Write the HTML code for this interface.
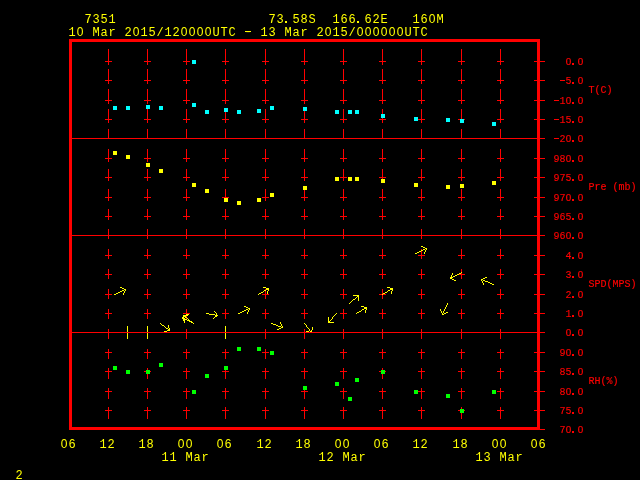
<!DOCTYPE html>
<html><head><meta charset="utf-8"><title>Meteogram 7351</title>
<style>
html,body{margin:0;padding:0;background:#000;overflow:hidden}
svg{display:block;will-change:transform}
text{font-family:"Liberation Mono",monospace;white-space:pre}
.t{font-size:12px;fill:#ffff00}
.z{font-family:"Liberation Sans",sans-serif;font-size:11.5px}
.l{font-size:10px;fill:#ff0000;stroke:#ff0000;stroke-width:.15px}
.zl{text-rendering:geometricPrecision;font-family:"Liberation Sans",sans-serif;font-size:9.6px}
.hy{font-size:16px}
.dt{font-size:13px}
.dl{font-size:14px}
</style></head><body>
<svg width="640" height="480" viewBox="0 0 640 480">
<rect width="640" height="480" fill="#000"/>
<g shape-rendering="crispEdges">
<g id="grid">
<rect x="108" y="49" width="1" height="10" fill="#ff0000"/>
<rect x="108" y="69" width="1" height="10" fill="#ff0000"/>
<rect x="108" y="89" width="1" height="10" fill="#ff0000"/>
<rect x="108" y="109" width="1" height="10" fill="#ff0000"/>
<rect x="108" y="129" width="1" height="10" fill="#ff0000"/>
<rect x="108" y="149" width="1" height="10" fill="#ff0000"/>
<rect x="108" y="169" width="1" height="10" fill="#ff0000"/>
<rect x="108" y="189" width="1" height="10" fill="#ff0000"/>
<rect x="108" y="209" width="1" height="10" fill="#ff0000"/>
<rect x="108" y="229" width="1" height="10" fill="#ff0000"/>
<rect x="108" y="249" width="1" height="10" fill="#ff0000"/>
<rect x="108" y="269" width="1" height="10" fill="#ff0000"/>
<rect x="108" y="289" width="1" height="10" fill="#ff0000"/>
<rect x="108" y="309" width="1" height="10" fill="#ff0000"/>
<rect x="108" y="329" width="1" height="10" fill="#ff0000"/>
<rect x="108" y="349" width="1" height="10" fill="#ff0000"/>
<rect x="108" y="369" width="1" height="10" fill="#ff0000"/>
<rect x="108" y="389" width="1" height="10" fill="#ff0000"/>
<rect x="108" y="409" width="1" height="10" fill="#ff0000"/>
<rect x="105" y="61" width="7" height="1" fill="#ff0000"/>
<rect x="108" y="58" width="1" height="7" fill="#ff0000"/>
<rect x="105" y="80" width="7" height="1" fill="#ff0000"/>
<rect x="108" y="77" width="1" height="7" fill="#ff0000"/>
<rect x="105" y="100" width="7" height="1" fill="#ff0000"/>
<rect x="108" y="97" width="1" height="7" fill="#ff0000"/>
<rect x="105" y="119" width="7" height="1" fill="#ff0000"/>
<rect x="108" y="116" width="1" height="7" fill="#ff0000"/>
<rect x="105" y="158" width="7" height="1" fill="#ff0000"/>
<rect x="108" y="155" width="1" height="7" fill="#ff0000"/>
<rect x="105" y="177" width="7" height="1" fill="#ff0000"/>
<rect x="108" y="174" width="1" height="7" fill="#ff0000"/>
<rect x="105" y="197" width="7" height="1" fill="#ff0000"/>
<rect x="108" y="194" width="1" height="7" fill="#ff0000"/>
<rect x="105" y="216" width="7" height="1" fill="#ff0000"/>
<rect x="108" y="213" width="1" height="7" fill="#ff0000"/>
<rect x="105" y="255" width="7" height="1" fill="#ff0000"/>
<rect x="108" y="252" width="1" height="7" fill="#ff0000"/>
<rect x="105" y="274" width="7" height="1" fill="#ff0000"/>
<rect x="108" y="271" width="1" height="7" fill="#ff0000"/>
<rect x="105" y="294" width="7" height="1" fill="#ff0000"/>
<rect x="108" y="291" width="1" height="7" fill="#ff0000"/>
<rect x="105" y="313" width="7" height="1" fill="#ff0000"/>
<rect x="108" y="310" width="1" height="7" fill="#ff0000"/>
<rect x="105" y="352" width="7" height="1" fill="#ff0000"/>
<rect x="108" y="349" width="1" height="7" fill="#ff0000"/>
<rect x="105" y="371" width="7" height="1" fill="#ff0000"/>
<rect x="108" y="368" width="1" height="7" fill="#ff0000"/>
<rect x="105" y="391" width="7" height="1" fill="#ff0000"/>
<rect x="108" y="388" width="1" height="7" fill="#ff0000"/>
<rect x="105" y="410" width="7" height="1" fill="#ff0000"/>
<rect x="108" y="407" width="1" height="7" fill="#ff0000"/>
<rect x="147" y="49" width="1" height="10" fill="#ff0000"/>
<rect x="147" y="69" width="1" height="10" fill="#ff0000"/>
<rect x="147" y="89" width="1" height="10" fill="#ff0000"/>
<rect x="147" y="109" width="1" height="10" fill="#ff0000"/>
<rect x="147" y="129" width="1" height="10" fill="#ff0000"/>
<rect x="147" y="149" width="1" height="10" fill="#ff0000"/>
<rect x="147" y="169" width="1" height="10" fill="#ff0000"/>
<rect x="147" y="189" width="1" height="10" fill="#ff0000"/>
<rect x="147" y="209" width="1" height="10" fill="#ff0000"/>
<rect x="147" y="229" width="1" height="10" fill="#ff0000"/>
<rect x="147" y="249" width="1" height="10" fill="#ff0000"/>
<rect x="147" y="269" width="1" height="10" fill="#ff0000"/>
<rect x="147" y="289" width="1" height="10" fill="#ff0000"/>
<rect x="147" y="309" width="1" height="10" fill="#ff0000"/>
<rect x="147" y="329" width="1" height="10" fill="#ff0000"/>
<rect x="147" y="349" width="1" height="10" fill="#ff0000"/>
<rect x="147" y="369" width="1" height="10" fill="#ff0000"/>
<rect x="147" y="389" width="1" height="10" fill="#ff0000"/>
<rect x="147" y="409" width="1" height="10" fill="#ff0000"/>
<rect x="144" y="61" width="7" height="1" fill="#ff0000"/>
<rect x="147" y="58" width="1" height="7" fill="#ff0000"/>
<rect x="144" y="80" width="7" height="1" fill="#ff0000"/>
<rect x="147" y="77" width="1" height="7" fill="#ff0000"/>
<rect x="144" y="100" width="7" height="1" fill="#ff0000"/>
<rect x="147" y="97" width="1" height="7" fill="#ff0000"/>
<rect x="144" y="119" width="7" height="1" fill="#ff0000"/>
<rect x="147" y="116" width="1" height="7" fill="#ff0000"/>
<rect x="144" y="158" width="7" height="1" fill="#ff0000"/>
<rect x="147" y="155" width="1" height="7" fill="#ff0000"/>
<rect x="144" y="177" width="7" height="1" fill="#ff0000"/>
<rect x="147" y="174" width="1" height="7" fill="#ff0000"/>
<rect x="144" y="197" width="7" height="1" fill="#ff0000"/>
<rect x="147" y="194" width="1" height="7" fill="#ff0000"/>
<rect x="144" y="216" width="7" height="1" fill="#ff0000"/>
<rect x="147" y="213" width="1" height="7" fill="#ff0000"/>
<rect x="144" y="255" width="7" height="1" fill="#ff0000"/>
<rect x="147" y="252" width="1" height="7" fill="#ff0000"/>
<rect x="144" y="274" width="7" height="1" fill="#ff0000"/>
<rect x="147" y="271" width="1" height="7" fill="#ff0000"/>
<rect x="144" y="294" width="7" height="1" fill="#ff0000"/>
<rect x="147" y="291" width="1" height="7" fill="#ff0000"/>
<rect x="144" y="313" width="7" height="1" fill="#ff0000"/>
<rect x="147" y="310" width="1" height="7" fill="#ff0000"/>
<rect x="144" y="352" width="7" height="1" fill="#ff0000"/>
<rect x="147" y="349" width="1" height="7" fill="#ff0000"/>
<rect x="144" y="371" width="7" height="1" fill="#ff0000"/>
<rect x="147" y="368" width="1" height="7" fill="#ff0000"/>
<rect x="144" y="391" width="7" height="1" fill="#ff0000"/>
<rect x="147" y="388" width="1" height="7" fill="#ff0000"/>
<rect x="144" y="410" width="7" height="1" fill="#ff0000"/>
<rect x="147" y="407" width="1" height="7" fill="#ff0000"/>
<rect x="186" y="49" width="1" height="10" fill="#ff0000"/>
<rect x="186" y="69" width="1" height="10" fill="#ff0000"/>
<rect x="186" y="89" width="1" height="10" fill="#ff0000"/>
<rect x="186" y="109" width="1" height="10" fill="#ff0000"/>
<rect x="186" y="129" width="1" height="10" fill="#ff0000"/>
<rect x="186" y="149" width="1" height="10" fill="#ff0000"/>
<rect x="186" y="169" width="1" height="10" fill="#ff0000"/>
<rect x="186" y="189" width="1" height="10" fill="#ff0000"/>
<rect x="186" y="209" width="1" height="10" fill="#ff0000"/>
<rect x="186" y="229" width="1" height="10" fill="#ff0000"/>
<rect x="186" y="249" width="1" height="10" fill="#ff0000"/>
<rect x="186" y="269" width="1" height="10" fill="#ff0000"/>
<rect x="186" y="289" width="1" height="10" fill="#ff0000"/>
<rect x="186" y="309" width="1" height="10" fill="#ff0000"/>
<rect x="186" y="329" width="1" height="10" fill="#ff0000"/>
<rect x="186" y="349" width="1" height="10" fill="#ff0000"/>
<rect x="186" y="369" width="1" height="10" fill="#ff0000"/>
<rect x="186" y="389" width="1" height="10" fill="#ff0000"/>
<rect x="186" y="409" width="1" height="10" fill="#ff0000"/>
<rect x="183" y="61" width="7" height="1" fill="#ff0000"/>
<rect x="186" y="58" width="1" height="7" fill="#ff0000"/>
<rect x="183" y="80" width="7" height="1" fill="#ff0000"/>
<rect x="186" y="77" width="1" height="7" fill="#ff0000"/>
<rect x="183" y="100" width="7" height="1" fill="#ff0000"/>
<rect x="186" y="97" width="1" height="7" fill="#ff0000"/>
<rect x="183" y="119" width="7" height="1" fill="#ff0000"/>
<rect x="186" y="116" width="1" height="7" fill="#ff0000"/>
<rect x="183" y="158" width="7" height="1" fill="#ff0000"/>
<rect x="186" y="155" width="1" height="7" fill="#ff0000"/>
<rect x="183" y="177" width="7" height="1" fill="#ff0000"/>
<rect x="186" y="174" width="1" height="7" fill="#ff0000"/>
<rect x="183" y="197" width="7" height="1" fill="#ff0000"/>
<rect x="186" y="194" width="1" height="7" fill="#ff0000"/>
<rect x="183" y="216" width="7" height="1" fill="#ff0000"/>
<rect x="186" y="213" width="1" height="7" fill="#ff0000"/>
<rect x="183" y="255" width="7" height="1" fill="#ff0000"/>
<rect x="186" y="252" width="1" height="7" fill="#ff0000"/>
<rect x="183" y="274" width="7" height="1" fill="#ff0000"/>
<rect x="186" y="271" width="1" height="7" fill="#ff0000"/>
<rect x="183" y="294" width="7" height="1" fill="#ff0000"/>
<rect x="186" y="291" width="1" height="7" fill="#ff0000"/>
<rect x="183" y="313" width="7" height="1" fill="#ff0000"/>
<rect x="186" y="310" width="1" height="7" fill="#ff0000"/>
<rect x="183" y="352" width="7" height="1" fill="#ff0000"/>
<rect x="186" y="349" width="1" height="7" fill="#ff0000"/>
<rect x="183" y="371" width="7" height="1" fill="#ff0000"/>
<rect x="186" y="368" width="1" height="7" fill="#ff0000"/>
<rect x="183" y="391" width="7" height="1" fill="#ff0000"/>
<rect x="186" y="388" width="1" height="7" fill="#ff0000"/>
<rect x="183" y="410" width="7" height="1" fill="#ff0000"/>
<rect x="186" y="407" width="1" height="7" fill="#ff0000"/>
<rect x="225" y="49" width="1" height="10" fill="#ff0000"/>
<rect x="225" y="69" width="1" height="10" fill="#ff0000"/>
<rect x="225" y="89" width="1" height="10" fill="#ff0000"/>
<rect x="225" y="109" width="1" height="10" fill="#ff0000"/>
<rect x="225" y="129" width="1" height="10" fill="#ff0000"/>
<rect x="225" y="149" width="1" height="10" fill="#ff0000"/>
<rect x="225" y="169" width="1" height="10" fill="#ff0000"/>
<rect x="225" y="189" width="1" height="10" fill="#ff0000"/>
<rect x="225" y="209" width="1" height="10" fill="#ff0000"/>
<rect x="225" y="229" width="1" height="10" fill="#ff0000"/>
<rect x="225" y="249" width="1" height="10" fill="#ff0000"/>
<rect x="225" y="269" width="1" height="10" fill="#ff0000"/>
<rect x="225" y="289" width="1" height="10" fill="#ff0000"/>
<rect x="225" y="309" width="1" height="10" fill="#ff0000"/>
<rect x="225" y="329" width="1" height="10" fill="#ff0000"/>
<rect x="225" y="349" width="1" height="10" fill="#ff0000"/>
<rect x="225" y="369" width="1" height="10" fill="#ff0000"/>
<rect x="225" y="389" width="1" height="10" fill="#ff0000"/>
<rect x="225" y="409" width="1" height="10" fill="#ff0000"/>
<rect x="222" y="61" width="7" height="1" fill="#ff0000"/>
<rect x="225" y="58" width="1" height="7" fill="#ff0000"/>
<rect x="222" y="80" width="7" height="1" fill="#ff0000"/>
<rect x="225" y="77" width="1" height="7" fill="#ff0000"/>
<rect x="222" y="100" width="7" height="1" fill="#ff0000"/>
<rect x="225" y="97" width="1" height="7" fill="#ff0000"/>
<rect x="222" y="119" width="7" height="1" fill="#ff0000"/>
<rect x="225" y="116" width="1" height="7" fill="#ff0000"/>
<rect x="222" y="158" width="7" height="1" fill="#ff0000"/>
<rect x="225" y="155" width="1" height="7" fill="#ff0000"/>
<rect x="222" y="177" width="7" height="1" fill="#ff0000"/>
<rect x="225" y="174" width="1" height="7" fill="#ff0000"/>
<rect x="222" y="197" width="7" height="1" fill="#ff0000"/>
<rect x="225" y="194" width="1" height="7" fill="#ff0000"/>
<rect x="222" y="216" width="7" height="1" fill="#ff0000"/>
<rect x="225" y="213" width="1" height="7" fill="#ff0000"/>
<rect x="222" y="255" width="7" height="1" fill="#ff0000"/>
<rect x="225" y="252" width="1" height="7" fill="#ff0000"/>
<rect x="222" y="274" width="7" height="1" fill="#ff0000"/>
<rect x="225" y="271" width="1" height="7" fill="#ff0000"/>
<rect x="222" y="294" width="7" height="1" fill="#ff0000"/>
<rect x="225" y="291" width="1" height="7" fill="#ff0000"/>
<rect x="222" y="313" width="7" height="1" fill="#ff0000"/>
<rect x="225" y="310" width="1" height="7" fill="#ff0000"/>
<rect x="222" y="352" width="7" height="1" fill="#ff0000"/>
<rect x="225" y="349" width="1" height="7" fill="#ff0000"/>
<rect x="222" y="371" width="7" height="1" fill="#ff0000"/>
<rect x="225" y="368" width="1" height="7" fill="#ff0000"/>
<rect x="222" y="391" width="7" height="1" fill="#ff0000"/>
<rect x="225" y="388" width="1" height="7" fill="#ff0000"/>
<rect x="222" y="410" width="7" height="1" fill="#ff0000"/>
<rect x="225" y="407" width="1" height="7" fill="#ff0000"/>
<rect x="265" y="49" width="1" height="10" fill="#ff0000"/>
<rect x="265" y="69" width="1" height="10" fill="#ff0000"/>
<rect x="265" y="89" width="1" height="10" fill="#ff0000"/>
<rect x="265" y="109" width="1" height="10" fill="#ff0000"/>
<rect x="265" y="129" width="1" height="10" fill="#ff0000"/>
<rect x="265" y="149" width="1" height="10" fill="#ff0000"/>
<rect x="265" y="169" width="1" height="10" fill="#ff0000"/>
<rect x="265" y="189" width="1" height="10" fill="#ff0000"/>
<rect x="265" y="209" width="1" height="10" fill="#ff0000"/>
<rect x="265" y="229" width="1" height="10" fill="#ff0000"/>
<rect x="265" y="249" width="1" height="10" fill="#ff0000"/>
<rect x="265" y="269" width="1" height="10" fill="#ff0000"/>
<rect x="265" y="289" width="1" height="10" fill="#ff0000"/>
<rect x="265" y="309" width="1" height="10" fill="#ff0000"/>
<rect x="265" y="329" width="1" height="10" fill="#ff0000"/>
<rect x="265" y="349" width="1" height="10" fill="#ff0000"/>
<rect x="265" y="369" width="1" height="10" fill="#ff0000"/>
<rect x="265" y="389" width="1" height="10" fill="#ff0000"/>
<rect x="265" y="409" width="1" height="10" fill="#ff0000"/>
<rect x="262" y="61" width="7" height="1" fill="#ff0000"/>
<rect x="265" y="58" width="1" height="7" fill="#ff0000"/>
<rect x="262" y="80" width="7" height="1" fill="#ff0000"/>
<rect x="265" y="77" width="1" height="7" fill="#ff0000"/>
<rect x="262" y="100" width="7" height="1" fill="#ff0000"/>
<rect x="265" y="97" width="1" height="7" fill="#ff0000"/>
<rect x="262" y="119" width="7" height="1" fill="#ff0000"/>
<rect x="265" y="116" width="1" height="7" fill="#ff0000"/>
<rect x="262" y="158" width="7" height="1" fill="#ff0000"/>
<rect x="265" y="155" width="1" height="7" fill="#ff0000"/>
<rect x="262" y="177" width="7" height="1" fill="#ff0000"/>
<rect x="265" y="174" width="1" height="7" fill="#ff0000"/>
<rect x="262" y="197" width="7" height="1" fill="#ff0000"/>
<rect x="265" y="194" width="1" height="7" fill="#ff0000"/>
<rect x="262" y="216" width="7" height="1" fill="#ff0000"/>
<rect x="265" y="213" width="1" height="7" fill="#ff0000"/>
<rect x="262" y="255" width="7" height="1" fill="#ff0000"/>
<rect x="265" y="252" width="1" height="7" fill="#ff0000"/>
<rect x="262" y="274" width="7" height="1" fill="#ff0000"/>
<rect x="265" y="271" width="1" height="7" fill="#ff0000"/>
<rect x="262" y="294" width="7" height="1" fill="#ff0000"/>
<rect x="265" y="291" width="1" height="7" fill="#ff0000"/>
<rect x="262" y="313" width="7" height="1" fill="#ff0000"/>
<rect x="265" y="310" width="1" height="7" fill="#ff0000"/>
<rect x="262" y="352" width="7" height="1" fill="#ff0000"/>
<rect x="265" y="349" width="1" height="7" fill="#ff0000"/>
<rect x="262" y="371" width="7" height="1" fill="#ff0000"/>
<rect x="265" y="368" width="1" height="7" fill="#ff0000"/>
<rect x="262" y="391" width="7" height="1" fill="#ff0000"/>
<rect x="265" y="388" width="1" height="7" fill="#ff0000"/>
<rect x="262" y="410" width="7" height="1" fill="#ff0000"/>
<rect x="265" y="407" width="1" height="7" fill="#ff0000"/>
<rect x="304" y="49" width="1" height="10" fill="#ff0000"/>
<rect x="304" y="69" width="1" height="10" fill="#ff0000"/>
<rect x="304" y="89" width="1" height="10" fill="#ff0000"/>
<rect x="304" y="109" width="1" height="10" fill="#ff0000"/>
<rect x="304" y="129" width="1" height="10" fill="#ff0000"/>
<rect x="304" y="149" width="1" height="10" fill="#ff0000"/>
<rect x="304" y="169" width="1" height="10" fill="#ff0000"/>
<rect x="304" y="189" width="1" height="10" fill="#ff0000"/>
<rect x="304" y="209" width="1" height="10" fill="#ff0000"/>
<rect x="304" y="229" width="1" height="10" fill="#ff0000"/>
<rect x="304" y="249" width="1" height="10" fill="#ff0000"/>
<rect x="304" y="269" width="1" height="10" fill="#ff0000"/>
<rect x="304" y="289" width="1" height="10" fill="#ff0000"/>
<rect x="304" y="309" width="1" height="10" fill="#ff0000"/>
<rect x="304" y="329" width="1" height="10" fill="#ff0000"/>
<rect x="304" y="349" width="1" height="10" fill="#ff0000"/>
<rect x="304" y="369" width="1" height="10" fill="#ff0000"/>
<rect x="304" y="389" width="1" height="10" fill="#ff0000"/>
<rect x="304" y="409" width="1" height="10" fill="#ff0000"/>
<rect x="301" y="61" width="7" height="1" fill="#ff0000"/>
<rect x="304" y="58" width="1" height="7" fill="#ff0000"/>
<rect x="301" y="80" width="7" height="1" fill="#ff0000"/>
<rect x="304" y="77" width="1" height="7" fill="#ff0000"/>
<rect x="301" y="100" width="7" height="1" fill="#ff0000"/>
<rect x="304" y="97" width="1" height="7" fill="#ff0000"/>
<rect x="301" y="119" width="7" height="1" fill="#ff0000"/>
<rect x="304" y="116" width="1" height="7" fill="#ff0000"/>
<rect x="301" y="158" width="7" height="1" fill="#ff0000"/>
<rect x="304" y="155" width="1" height="7" fill="#ff0000"/>
<rect x="301" y="177" width="7" height="1" fill="#ff0000"/>
<rect x="304" y="174" width="1" height="7" fill="#ff0000"/>
<rect x="301" y="197" width="7" height="1" fill="#ff0000"/>
<rect x="304" y="194" width="1" height="7" fill="#ff0000"/>
<rect x="301" y="216" width="7" height="1" fill="#ff0000"/>
<rect x="304" y="213" width="1" height="7" fill="#ff0000"/>
<rect x="301" y="255" width="7" height="1" fill="#ff0000"/>
<rect x="304" y="252" width="1" height="7" fill="#ff0000"/>
<rect x="301" y="274" width="7" height="1" fill="#ff0000"/>
<rect x="304" y="271" width="1" height="7" fill="#ff0000"/>
<rect x="301" y="294" width="7" height="1" fill="#ff0000"/>
<rect x="304" y="291" width="1" height="7" fill="#ff0000"/>
<rect x="301" y="313" width="7" height="1" fill="#ff0000"/>
<rect x="304" y="310" width="1" height="7" fill="#ff0000"/>
<rect x="301" y="352" width="7" height="1" fill="#ff0000"/>
<rect x="304" y="349" width="1" height="7" fill="#ff0000"/>
<rect x="301" y="371" width="7" height="1" fill="#ff0000"/>
<rect x="304" y="368" width="1" height="7" fill="#ff0000"/>
<rect x="301" y="391" width="7" height="1" fill="#ff0000"/>
<rect x="304" y="388" width="1" height="7" fill="#ff0000"/>
<rect x="301" y="410" width="7" height="1" fill="#ff0000"/>
<rect x="304" y="407" width="1" height="7" fill="#ff0000"/>
<rect x="343" y="49" width="1" height="10" fill="#ff0000"/>
<rect x="343" y="69" width="1" height="10" fill="#ff0000"/>
<rect x="343" y="89" width="1" height="10" fill="#ff0000"/>
<rect x="343" y="109" width="1" height="10" fill="#ff0000"/>
<rect x="343" y="129" width="1" height="10" fill="#ff0000"/>
<rect x="343" y="149" width="1" height="10" fill="#ff0000"/>
<rect x="343" y="169" width="1" height="10" fill="#ff0000"/>
<rect x="343" y="189" width="1" height="10" fill="#ff0000"/>
<rect x="343" y="209" width="1" height="10" fill="#ff0000"/>
<rect x="343" y="229" width="1" height="10" fill="#ff0000"/>
<rect x="343" y="249" width="1" height="10" fill="#ff0000"/>
<rect x="343" y="269" width="1" height="10" fill="#ff0000"/>
<rect x="343" y="289" width="1" height="10" fill="#ff0000"/>
<rect x="343" y="309" width="1" height="10" fill="#ff0000"/>
<rect x="343" y="329" width="1" height="10" fill="#ff0000"/>
<rect x="343" y="349" width="1" height="10" fill="#ff0000"/>
<rect x="343" y="369" width="1" height="10" fill="#ff0000"/>
<rect x="343" y="389" width="1" height="10" fill="#ff0000"/>
<rect x="343" y="409" width="1" height="10" fill="#ff0000"/>
<rect x="340" y="61" width="7" height="1" fill="#ff0000"/>
<rect x="343" y="58" width="1" height="7" fill="#ff0000"/>
<rect x="340" y="80" width="7" height="1" fill="#ff0000"/>
<rect x="343" y="77" width="1" height="7" fill="#ff0000"/>
<rect x="340" y="100" width="7" height="1" fill="#ff0000"/>
<rect x="343" y="97" width="1" height="7" fill="#ff0000"/>
<rect x="340" y="119" width="7" height="1" fill="#ff0000"/>
<rect x="343" y="116" width="1" height="7" fill="#ff0000"/>
<rect x="340" y="158" width="7" height="1" fill="#ff0000"/>
<rect x="343" y="155" width="1" height="7" fill="#ff0000"/>
<rect x="340" y="177" width="7" height="1" fill="#ff0000"/>
<rect x="343" y="174" width="1" height="7" fill="#ff0000"/>
<rect x="340" y="197" width="7" height="1" fill="#ff0000"/>
<rect x="343" y="194" width="1" height="7" fill="#ff0000"/>
<rect x="340" y="216" width="7" height="1" fill="#ff0000"/>
<rect x="343" y="213" width="1" height="7" fill="#ff0000"/>
<rect x="340" y="255" width="7" height="1" fill="#ff0000"/>
<rect x="343" y="252" width="1" height="7" fill="#ff0000"/>
<rect x="340" y="274" width="7" height="1" fill="#ff0000"/>
<rect x="343" y="271" width="1" height="7" fill="#ff0000"/>
<rect x="340" y="294" width="7" height="1" fill="#ff0000"/>
<rect x="343" y="291" width="1" height="7" fill="#ff0000"/>
<rect x="340" y="313" width="7" height="1" fill="#ff0000"/>
<rect x="343" y="310" width="1" height="7" fill="#ff0000"/>
<rect x="340" y="352" width="7" height="1" fill="#ff0000"/>
<rect x="343" y="349" width="1" height="7" fill="#ff0000"/>
<rect x="340" y="371" width="7" height="1" fill="#ff0000"/>
<rect x="343" y="368" width="1" height="7" fill="#ff0000"/>
<rect x="340" y="391" width="7" height="1" fill="#ff0000"/>
<rect x="343" y="388" width="1" height="7" fill="#ff0000"/>
<rect x="340" y="410" width="7" height="1" fill="#ff0000"/>
<rect x="343" y="407" width="1" height="7" fill="#ff0000"/>
<rect x="382" y="49" width="1" height="10" fill="#ff0000"/>
<rect x="382" y="69" width="1" height="10" fill="#ff0000"/>
<rect x="382" y="89" width="1" height="10" fill="#ff0000"/>
<rect x="382" y="109" width="1" height="10" fill="#ff0000"/>
<rect x="382" y="129" width="1" height="10" fill="#ff0000"/>
<rect x="382" y="149" width="1" height="10" fill="#ff0000"/>
<rect x="382" y="169" width="1" height="10" fill="#ff0000"/>
<rect x="382" y="189" width="1" height="10" fill="#ff0000"/>
<rect x="382" y="209" width="1" height="10" fill="#ff0000"/>
<rect x="382" y="229" width="1" height="10" fill="#ff0000"/>
<rect x="382" y="249" width="1" height="10" fill="#ff0000"/>
<rect x="382" y="269" width="1" height="10" fill="#ff0000"/>
<rect x="382" y="289" width="1" height="10" fill="#ff0000"/>
<rect x="382" y="309" width="1" height="10" fill="#ff0000"/>
<rect x="382" y="329" width="1" height="10" fill="#ff0000"/>
<rect x="382" y="349" width="1" height="10" fill="#ff0000"/>
<rect x="382" y="369" width="1" height="10" fill="#ff0000"/>
<rect x="382" y="389" width="1" height="10" fill="#ff0000"/>
<rect x="382" y="409" width="1" height="10" fill="#ff0000"/>
<rect x="379" y="61" width="7" height="1" fill="#ff0000"/>
<rect x="382" y="58" width="1" height="7" fill="#ff0000"/>
<rect x="379" y="80" width="7" height="1" fill="#ff0000"/>
<rect x="382" y="77" width="1" height="7" fill="#ff0000"/>
<rect x="379" y="100" width="7" height="1" fill="#ff0000"/>
<rect x="382" y="97" width="1" height="7" fill="#ff0000"/>
<rect x="379" y="119" width="7" height="1" fill="#ff0000"/>
<rect x="382" y="116" width="1" height="7" fill="#ff0000"/>
<rect x="379" y="158" width="7" height="1" fill="#ff0000"/>
<rect x="382" y="155" width="1" height="7" fill="#ff0000"/>
<rect x="379" y="177" width="7" height="1" fill="#ff0000"/>
<rect x="382" y="174" width="1" height="7" fill="#ff0000"/>
<rect x="379" y="197" width="7" height="1" fill="#ff0000"/>
<rect x="382" y="194" width="1" height="7" fill="#ff0000"/>
<rect x="379" y="216" width="7" height="1" fill="#ff0000"/>
<rect x="382" y="213" width="1" height="7" fill="#ff0000"/>
<rect x="379" y="255" width="7" height="1" fill="#ff0000"/>
<rect x="382" y="252" width="1" height="7" fill="#ff0000"/>
<rect x="379" y="274" width="7" height="1" fill="#ff0000"/>
<rect x="382" y="271" width="1" height="7" fill="#ff0000"/>
<rect x="379" y="294" width="7" height="1" fill="#ff0000"/>
<rect x="382" y="291" width="1" height="7" fill="#ff0000"/>
<rect x="379" y="313" width="7" height="1" fill="#ff0000"/>
<rect x="382" y="310" width="1" height="7" fill="#ff0000"/>
<rect x="379" y="352" width="7" height="1" fill="#ff0000"/>
<rect x="382" y="349" width="1" height="7" fill="#ff0000"/>
<rect x="379" y="371" width="7" height="1" fill="#ff0000"/>
<rect x="382" y="368" width="1" height="7" fill="#ff0000"/>
<rect x="379" y="391" width="7" height="1" fill="#ff0000"/>
<rect x="382" y="388" width="1" height="7" fill="#ff0000"/>
<rect x="379" y="410" width="7" height="1" fill="#ff0000"/>
<rect x="382" y="407" width="1" height="7" fill="#ff0000"/>
<rect x="421" y="49" width="1" height="10" fill="#ff0000"/>
<rect x="421" y="69" width="1" height="10" fill="#ff0000"/>
<rect x="421" y="89" width="1" height="10" fill="#ff0000"/>
<rect x="421" y="109" width="1" height="10" fill="#ff0000"/>
<rect x="421" y="129" width="1" height="10" fill="#ff0000"/>
<rect x="421" y="149" width="1" height="10" fill="#ff0000"/>
<rect x="421" y="169" width="1" height="10" fill="#ff0000"/>
<rect x="421" y="189" width="1" height="10" fill="#ff0000"/>
<rect x="421" y="209" width="1" height="10" fill="#ff0000"/>
<rect x="421" y="229" width="1" height="10" fill="#ff0000"/>
<rect x="421" y="249" width="1" height="10" fill="#ff0000"/>
<rect x="421" y="269" width="1" height="10" fill="#ff0000"/>
<rect x="421" y="289" width="1" height="10" fill="#ff0000"/>
<rect x="421" y="309" width="1" height="10" fill="#ff0000"/>
<rect x="421" y="329" width="1" height="10" fill="#ff0000"/>
<rect x="421" y="349" width="1" height="10" fill="#ff0000"/>
<rect x="421" y="369" width="1" height="10" fill="#ff0000"/>
<rect x="421" y="389" width="1" height="10" fill="#ff0000"/>
<rect x="421" y="409" width="1" height="10" fill="#ff0000"/>
<rect x="418" y="61" width="7" height="1" fill="#ff0000"/>
<rect x="421" y="58" width="1" height="7" fill="#ff0000"/>
<rect x="418" y="80" width="7" height="1" fill="#ff0000"/>
<rect x="421" y="77" width="1" height="7" fill="#ff0000"/>
<rect x="418" y="100" width="7" height="1" fill="#ff0000"/>
<rect x="421" y="97" width="1" height="7" fill="#ff0000"/>
<rect x="418" y="119" width="7" height="1" fill="#ff0000"/>
<rect x="421" y="116" width="1" height="7" fill="#ff0000"/>
<rect x="418" y="158" width="7" height="1" fill="#ff0000"/>
<rect x="421" y="155" width="1" height="7" fill="#ff0000"/>
<rect x="418" y="177" width="7" height="1" fill="#ff0000"/>
<rect x="421" y="174" width="1" height="7" fill="#ff0000"/>
<rect x="418" y="197" width="7" height="1" fill="#ff0000"/>
<rect x="421" y="194" width="1" height="7" fill="#ff0000"/>
<rect x="418" y="216" width="7" height="1" fill="#ff0000"/>
<rect x="421" y="213" width="1" height="7" fill="#ff0000"/>
<rect x="418" y="255" width="7" height="1" fill="#ff0000"/>
<rect x="421" y="252" width="1" height="7" fill="#ff0000"/>
<rect x="418" y="274" width="7" height="1" fill="#ff0000"/>
<rect x="421" y="271" width="1" height="7" fill="#ff0000"/>
<rect x="418" y="294" width="7" height="1" fill="#ff0000"/>
<rect x="421" y="291" width="1" height="7" fill="#ff0000"/>
<rect x="418" y="313" width="7" height="1" fill="#ff0000"/>
<rect x="421" y="310" width="1" height="7" fill="#ff0000"/>
<rect x="418" y="352" width="7" height="1" fill="#ff0000"/>
<rect x="421" y="349" width="1" height="7" fill="#ff0000"/>
<rect x="418" y="371" width="7" height="1" fill="#ff0000"/>
<rect x="421" y="368" width="1" height="7" fill="#ff0000"/>
<rect x="418" y="391" width="7" height="1" fill="#ff0000"/>
<rect x="421" y="388" width="1" height="7" fill="#ff0000"/>
<rect x="418" y="410" width="7" height="1" fill="#ff0000"/>
<rect x="421" y="407" width="1" height="7" fill="#ff0000"/>
<rect x="461" y="49" width="1" height="10" fill="#ff0000"/>
<rect x="461" y="69" width="1" height="10" fill="#ff0000"/>
<rect x="461" y="89" width="1" height="10" fill="#ff0000"/>
<rect x="461" y="109" width="1" height="10" fill="#ff0000"/>
<rect x="461" y="129" width="1" height="10" fill="#ff0000"/>
<rect x="461" y="149" width="1" height="10" fill="#ff0000"/>
<rect x="461" y="169" width="1" height="10" fill="#ff0000"/>
<rect x="461" y="189" width="1" height="10" fill="#ff0000"/>
<rect x="461" y="209" width="1" height="10" fill="#ff0000"/>
<rect x="461" y="229" width="1" height="10" fill="#ff0000"/>
<rect x="461" y="249" width="1" height="10" fill="#ff0000"/>
<rect x="461" y="269" width="1" height="10" fill="#ff0000"/>
<rect x="461" y="289" width="1" height="10" fill="#ff0000"/>
<rect x="461" y="309" width="1" height="10" fill="#ff0000"/>
<rect x="461" y="329" width="1" height="10" fill="#ff0000"/>
<rect x="461" y="349" width="1" height="10" fill="#ff0000"/>
<rect x="461" y="369" width="1" height="10" fill="#ff0000"/>
<rect x="461" y="389" width="1" height="10" fill="#ff0000"/>
<rect x="461" y="409" width="1" height="10" fill="#ff0000"/>
<rect x="458" y="61" width="7" height="1" fill="#ff0000"/>
<rect x="461" y="58" width="1" height="7" fill="#ff0000"/>
<rect x="458" y="80" width="7" height="1" fill="#ff0000"/>
<rect x="461" y="77" width="1" height="7" fill="#ff0000"/>
<rect x="458" y="100" width="7" height="1" fill="#ff0000"/>
<rect x="461" y="97" width="1" height="7" fill="#ff0000"/>
<rect x="458" y="119" width="7" height="1" fill="#ff0000"/>
<rect x="461" y="116" width="1" height="7" fill="#ff0000"/>
<rect x="458" y="158" width="7" height="1" fill="#ff0000"/>
<rect x="461" y="155" width="1" height="7" fill="#ff0000"/>
<rect x="458" y="177" width="7" height="1" fill="#ff0000"/>
<rect x="461" y="174" width="1" height="7" fill="#ff0000"/>
<rect x="458" y="197" width="7" height="1" fill="#ff0000"/>
<rect x="461" y="194" width="1" height="7" fill="#ff0000"/>
<rect x="458" y="216" width="7" height="1" fill="#ff0000"/>
<rect x="461" y="213" width="1" height="7" fill="#ff0000"/>
<rect x="458" y="255" width="7" height="1" fill="#ff0000"/>
<rect x="461" y="252" width="1" height="7" fill="#ff0000"/>
<rect x="458" y="274" width="7" height="1" fill="#ff0000"/>
<rect x="461" y="271" width="1" height="7" fill="#ff0000"/>
<rect x="458" y="294" width="7" height="1" fill="#ff0000"/>
<rect x="461" y="291" width="1" height="7" fill="#ff0000"/>
<rect x="458" y="313" width="7" height="1" fill="#ff0000"/>
<rect x="461" y="310" width="1" height="7" fill="#ff0000"/>
<rect x="458" y="352" width="7" height="1" fill="#ff0000"/>
<rect x="461" y="349" width="1" height="7" fill="#ff0000"/>
<rect x="458" y="371" width="7" height="1" fill="#ff0000"/>
<rect x="461" y="368" width="1" height="7" fill="#ff0000"/>
<rect x="458" y="391" width="7" height="1" fill="#ff0000"/>
<rect x="461" y="388" width="1" height="7" fill="#ff0000"/>
<rect x="458" y="410" width="7" height="1" fill="#ff0000"/>
<rect x="461" y="407" width="1" height="7" fill="#ff0000"/>
<rect x="500" y="49" width="1" height="10" fill="#ff0000"/>
<rect x="500" y="69" width="1" height="10" fill="#ff0000"/>
<rect x="500" y="89" width="1" height="10" fill="#ff0000"/>
<rect x="500" y="109" width="1" height="10" fill="#ff0000"/>
<rect x="500" y="129" width="1" height="10" fill="#ff0000"/>
<rect x="500" y="149" width="1" height="10" fill="#ff0000"/>
<rect x="500" y="169" width="1" height="10" fill="#ff0000"/>
<rect x="500" y="189" width="1" height="10" fill="#ff0000"/>
<rect x="500" y="209" width="1" height="10" fill="#ff0000"/>
<rect x="500" y="229" width="1" height="10" fill="#ff0000"/>
<rect x="500" y="249" width="1" height="10" fill="#ff0000"/>
<rect x="500" y="269" width="1" height="10" fill="#ff0000"/>
<rect x="500" y="289" width="1" height="10" fill="#ff0000"/>
<rect x="500" y="309" width="1" height="10" fill="#ff0000"/>
<rect x="500" y="329" width="1" height="10" fill="#ff0000"/>
<rect x="500" y="349" width="1" height="10" fill="#ff0000"/>
<rect x="500" y="369" width="1" height="10" fill="#ff0000"/>
<rect x="500" y="389" width="1" height="10" fill="#ff0000"/>
<rect x="500" y="409" width="1" height="10" fill="#ff0000"/>
<rect x="497" y="61" width="7" height="1" fill="#ff0000"/>
<rect x="500" y="58" width="1" height="7" fill="#ff0000"/>
<rect x="497" y="80" width="7" height="1" fill="#ff0000"/>
<rect x="500" y="77" width="1" height="7" fill="#ff0000"/>
<rect x="497" y="100" width="7" height="1" fill="#ff0000"/>
<rect x="500" y="97" width="1" height="7" fill="#ff0000"/>
<rect x="497" y="119" width="7" height="1" fill="#ff0000"/>
<rect x="500" y="116" width="1" height="7" fill="#ff0000"/>
<rect x="497" y="158" width="7" height="1" fill="#ff0000"/>
<rect x="500" y="155" width="1" height="7" fill="#ff0000"/>
<rect x="497" y="177" width="7" height="1" fill="#ff0000"/>
<rect x="500" y="174" width="1" height="7" fill="#ff0000"/>
<rect x="497" y="197" width="7" height="1" fill="#ff0000"/>
<rect x="500" y="194" width="1" height="7" fill="#ff0000"/>
<rect x="497" y="216" width="7" height="1" fill="#ff0000"/>
<rect x="500" y="213" width="1" height="7" fill="#ff0000"/>
<rect x="497" y="255" width="7" height="1" fill="#ff0000"/>
<rect x="500" y="252" width="1" height="7" fill="#ff0000"/>
<rect x="497" y="274" width="7" height="1" fill="#ff0000"/>
<rect x="500" y="271" width="1" height="7" fill="#ff0000"/>
<rect x="497" y="294" width="7" height="1" fill="#ff0000"/>
<rect x="500" y="291" width="1" height="7" fill="#ff0000"/>
<rect x="497" y="313" width="7" height="1" fill="#ff0000"/>
<rect x="500" y="310" width="1" height="7" fill="#ff0000"/>
<rect x="497" y="352" width="7" height="1" fill="#ff0000"/>
<rect x="500" y="349" width="1" height="7" fill="#ff0000"/>
<rect x="497" y="371" width="7" height="1" fill="#ff0000"/>
<rect x="500" y="368" width="1" height="7" fill="#ff0000"/>
<rect x="497" y="391" width="7" height="1" fill="#ff0000"/>
<rect x="500" y="388" width="1" height="7" fill="#ff0000"/>
<rect x="497" y="410" width="7" height="1" fill="#ff0000"/>
<rect x="500" y="407" width="1" height="7" fill="#ff0000"/>
<rect x="534" y="61" width="11" height="1" fill="#ff0000"/>
<rect x="534" y="80" width="11" height="1" fill="#ff0000"/>
<rect x="534" y="100" width="11" height="1" fill="#ff0000"/>
<rect x="534" y="119" width="11" height="1" fill="#ff0000"/>
<rect x="534" y="138" width="11" height="1" fill="#ff0000"/>
<rect x="534" y="158" width="11" height="1" fill="#ff0000"/>
<rect x="534" y="177" width="11" height="1" fill="#ff0000"/>
<rect x="534" y="197" width="11" height="1" fill="#ff0000"/>
<rect x="534" y="216" width="11" height="1" fill="#ff0000"/>
<rect x="534" y="235" width="11" height="1" fill="#ff0000"/>
<rect x="534" y="255" width="11" height="1" fill="#ff0000"/>
<rect x="534" y="274" width="11" height="1" fill="#ff0000"/>
<rect x="534" y="294" width="11" height="1" fill="#ff0000"/>
<rect x="534" y="313" width="11" height="1" fill="#ff0000"/>
<rect x="534" y="332" width="11" height="1" fill="#ff0000"/>
<rect x="534" y="352" width="11" height="1" fill="#ff0000"/>
<rect x="534" y="371" width="11" height="1" fill="#ff0000"/>
<rect x="534" y="391" width="11" height="1" fill="#ff0000"/>
<rect x="534" y="410" width="11" height="1" fill="#ff0000"/>
<rect x="534" y="429" width="11" height="1" fill="#ff0000"/>
<rect x="69" y="39" width="3" height="391" fill="#ff0000"/>
<rect x="537" y="39" width="3" height="391" fill="#ff0000"/>
<rect x="69" y="39" width="471" height="3" fill="#ff0000"/>
<rect x="69" y="427" width="471" height="3" fill="#ff0000"/>
</g>
<g id="temp">
<rect x="113" y="106" width="4" height="4" fill="#00ffff"/>
<rect x="126" y="106" width="4" height="4" fill="#00ffff"/>
<rect x="146" y="105" width="4" height="4" fill="#00ffff"/>
<rect x="159" y="106" width="4" height="4" fill="#00ffff"/>
<rect x="192" y="60" width="4" height="4" fill="#00ffff"/>
<rect x="192" y="103" width="4" height="4" fill="#00ffff"/>
<rect x="205" y="110" width="4" height="4" fill="#00ffff"/>
<rect x="224" y="108" width="4" height="4" fill="#00ffff"/>
<rect x="237" y="110" width="4" height="4" fill="#00ffff"/>
<rect x="257" y="109" width="4" height="4" fill="#00ffff"/>
<rect x="270" y="106" width="4" height="4" fill="#00ffff"/>
<rect x="303" y="107" width="4" height="4" fill="#00ffff"/>
<rect x="335" y="110" width="4" height="4" fill="#00ffff"/>
<rect x="348" y="110" width="4" height="4" fill="#00ffff"/>
<rect x="355" y="110" width="4" height="4" fill="#00ffff"/>
<rect x="381" y="114" width="4" height="4" fill="#00ffff"/>
<rect x="414" y="117" width="4" height="4" fill="#00ffff"/>
<rect x="446" y="118" width="4" height="4" fill="#00ffff"/>
<rect x="460" y="119" width="4" height="4" fill="#00ffff"/>
<rect x="492" y="122" width="4" height="4" fill="#00ffff"/>
</g><g id="pres">
<rect x="113" y="151" width="4" height="4" fill="#ffff00"/>
<rect x="126" y="155" width="4" height="4" fill="#ffff00"/>
<rect x="146" y="163" width="4" height="4" fill="#ffff00"/>
<rect x="159" y="169" width="4" height="4" fill="#ffff00"/>
<rect x="192" y="183" width="4" height="4" fill="#ffff00"/>
<rect x="205" y="189" width="4" height="4" fill="#ffff00"/>
<rect x="224" y="198" width="4" height="4" fill="#ffff00"/>
<rect x="237" y="201" width="4" height="4" fill="#ffff00"/>
<rect x="257" y="198" width="4" height="4" fill="#ffff00"/>
<rect x="270" y="193" width="4" height="4" fill="#ffff00"/>
<rect x="303" y="186" width="4" height="4" fill="#ffff00"/>
<rect x="335" y="177" width="4" height="4" fill="#ffff00"/>
<rect x="348" y="177" width="4" height="4" fill="#ffff00"/>
<rect x="355" y="177" width="4" height="4" fill="#ffff00"/>
<rect x="381" y="179" width="4" height="4" fill="#ffff00"/>
<rect x="414" y="183" width="4" height="4" fill="#ffff00"/>
<rect x="446" y="185" width="4" height="4" fill="#ffff00"/>
<rect x="460" y="184" width="4" height="4" fill="#ffff00"/>
<rect x="492" y="181" width="4" height="4" fill="#ffff00"/>
</g><g id="rh">
<rect x="113" y="366" width="4" height="4" fill="#00ff00"/>
<rect x="126" y="370" width="4" height="4" fill="#00ff00"/>
<rect x="146" y="370" width="4" height="4" fill="#00ff00"/>
<rect x="159" y="363" width="4" height="4" fill="#00ff00"/>
<rect x="192" y="390" width="4" height="4" fill="#00ff00"/>
<rect x="205" y="374" width="4" height="4" fill="#00ff00"/>
<rect x="224" y="366" width="4" height="4" fill="#00ff00"/>
<rect x="237" y="347" width="4" height="4" fill="#00ff00"/>
<rect x="257" y="347" width="4" height="4" fill="#00ff00"/>
<rect x="270" y="351" width="4" height="4" fill="#00ff00"/>
<rect x="303" y="386" width="4" height="4" fill="#00ff00"/>
<rect x="335" y="382" width="4" height="4" fill="#00ff00"/>
<rect x="348" y="397" width="4" height="4" fill="#00ff00"/>
<rect x="355" y="378" width="4" height="4" fill="#00ff00"/>
<rect x="381" y="370" width="4" height="4" fill="#00ff00"/>
<rect x="414" y="390" width="4" height="4" fill="#00ff00"/>
<rect x="446" y="394" width="4" height="4" fill="#00ff00"/>
<rect x="460" y="409" width="4" height="4" fill="#00ff00"/>
<rect x="492" y="390" width="4" height="4" fill="#00ff00"/>
</g>
<g id="wind" stroke="#ffff00" stroke-width="1" fill="none">
<rect x="127" y="326" width="1" height="13" fill="#ffff00" stroke="none"/>
<rect x="147" y="326" width="1" height="13" fill="#ffff00" stroke="none"/>
<rect x="225" y="326" width="1" height="13" fill="#ffff00" stroke="none"/>
<path d="M120 287h2v1h-2zM122 288h2v1h-2zM124 289h2v1h-2zM122 290h2v1h-2zM125 290h1v1h-1zM120 291h2v1h-2zM124 291h1v1h-1zM118 292h2v1h-2zM124 292h1v1h-1zM116 293h2v1h-2zM123 293h1v1h-1zM114 294h2v1h-2zM123 294h1v1h-1z" fill="#ffff00" stroke="none"/>
<path d="M160 323h1v1h-1zM161 324h1v1h-1zM162 325h2v1h-2zM168 325h1v1h-1zM164 326h1v1h-1zM168 326h1v1h-1zM165 327h1v1h-1zM168 327h1v1h-1zM166 328h2v1h-2zM169 328h1v1h-1zM168 329h2v1h-2zM167 330h3v1h-3zM164 331h3v1h-3z" fill="#ffff00" stroke="none"/>
<path d="M186 314h3v1h-3zM183 315h3v1h-3zM183 316h2v1h-2zM183 317h1v1h-1zM185 317h2v1h-2zM184 318h1v1h-1zM187 318h1v1h-1zM184 319h1v1h-1zM188 319h1v1h-1zM184 320h1v1h-1zM189 320h1v1h-1zM190 321h2v1h-2zM192 322h1v1h-1zM193 323h1v1h-1z" fill="#ffff00" stroke="none"/>
<path d="M186 315h2v1h-2zM184 316h2v1h-2zM182 317h2v1h-2zM182 318h3v1h-3zM183 319h1v1h-1zM185 319h2v1h-2zM183 320h1v1h-1zM187 320h2v1h-2zM184 321h1v1h-1zM189 321h2v1h-2zM184 322h1v1h-1zM191 322h2v1h-2zM193 323h1v1h-1z" fill="#ffff00" stroke="none"/>
<path d="M214 311h1v1h-1zM215 312h1v1h-1zM206 313h3v1h-3zM216 313h1v1h-1zM209 314h6v1h-6zM216 314h1v1h-1zM215 315h3v1h-3zM215 316h2v1h-2zM214 317h1v1h-1zM213 318h1v1h-1z" fill="#ffff00" stroke="none"/>
<path d="M244 306h2v1h-2zM246 307h2v1h-2zM248 308h2v1h-2zM246 309h2v1h-2zM249 309h1v1h-1zM244 310h2v1h-2zM248 310h1v1h-1zM242 311h2v1h-2zM248 311h1v1h-1zM240 312h2v1h-2zM247 312h1v1h-1zM238 313h2v1h-2zM247 313h1v1h-1z" fill="#ffff00" stroke="none"/>
<path d="M263 287h3v1h-3zM266 288h3v1h-3zM266 289h3v1h-3zM264 290h2v1h-2zM268 290h1v1h-1zM263 291h1v1h-1zM267 291h1v1h-1zM261 292h2v1h-2zM267 292h1v1h-1zM259 293h2v1h-2zM267 293h1v1h-1zM258 294h1v1h-1z" fill="#ffff00" stroke="none"/>
<path d="M280 322h1v1h-1zM271 323h2v1h-2zM280 323h1v1h-1zM273 324h3v1h-3zM281 324h1v1h-1zM276 325h2v1h-2zM281 325h1v1h-1zM278 326h3v1h-3zM282 326h1v1h-1zM281 327h2v1h-2zM279 328h2v1h-2zM277 329h2v1h-2z" fill="#ffff00" stroke="none"/>
<path d="M304 323h1v1h-1zM305 324h1v1h-1zM306 325h1v1h-1zM306 326h1v1h-1zM307 327h1v1h-1zM312 327h1v1h-1zM308 328h1v1h-1zM312 328h1v1h-1zM309 329h1v1h-1zM312 329h1v1h-1zM309 330h1v1h-1zM311 330h1v1h-1zM306 331h3v1h-3zM310 331h2v1h-2zM309 332h3v1h-3z" fill="#ffff00" stroke="none"/>
<path d="M336 313h1v1h-1zM335 314h1v1h-1zM334 315h1v1h-1zM333 316h1v1h-1zM328 317h1v1h-1zM332 317h1v1h-1zM328 318h1v1h-1zM332 318h1v1h-1zM328 319h1v1h-1zM331 319h1v1h-1zM328 320h1v1h-1zM330 320h1v1h-1zM328 321h2v1h-2zM328 322h6v1h-6z" fill="#ffff00" stroke="none"/>
<path d="M353 295h6v1h-6zM357 296h2v1h-2zM356 297h1v1h-1zM358 297h1v1h-1zM355 298h1v1h-1zM358 298h1v1h-1zM353 299h2v1h-2zM358 299h1v1h-1zM352 300h1v1h-1zM358 300h1v1h-1zM351 301h1v1h-1zM350 302h1v1h-1zM349 303h1v1h-1z" fill="#ffff00" stroke="none"/>
<path d="M361 306h3v1h-3zM364 307h3v1h-3zM364 308h3v1h-3zM362 309h2v1h-2zM366 309h1v1h-1zM361 310h1v1h-1zM365 310h1v1h-1zM359 311h2v1h-2zM365 311h1v1h-1zM357 312h2v1h-2zM365 312h1v1h-1zM356 313h1v1h-1z" fill="#ffff00" stroke="none"/>
<path d="M387 287h3v1h-3zM390 288h3v1h-3zM390 289h3v1h-3zM388 290h2v1h-2zM392 290h1v1h-1zM387 291h1v1h-1zM391 291h1v1h-1zM385 292h2v1h-2zM391 292h1v1h-1zM383 293h2v1h-2zM391 293h1v1h-1zM382 294h1v1h-1z" fill="#ffff00" stroke="none"/>
<path d="M421 246h2v1h-2zM423 247h2v1h-2zM425 248h2v1h-2zM423 249h2v1h-2zM426 249h1v1h-1zM421 250h2v1h-2zM425 250h1v1h-1zM419 251h2v1h-2zM425 251h1v1h-1zM417 252h2v1h-2zM424 252h1v1h-1zM415 253h2v1h-2zM424 253h1v1h-1z" fill="#ffff00" stroke="none"/>
<path d="M447 303h1v1h-1zM447 304h1v1h-1zM446 305h1v1h-1zM446 306h1v1h-1zM445 307h1v1h-1zM445 308h1v1h-1zM440 309h1v1h-1zM444 309h1v1h-1zM440 310h1v1h-1zM444 310h1v1h-1zM441 311h1v1h-1zM443 311h1v1h-1zM441 312h1v1h-1zM443 312h1v1h-1zM446 312h2v1h-2zM442 313h1v1h-1zM444 313h2v1h-2zM442 314h2v1h-2z" fill="#ffff00" stroke="none"/>
<path d="M461 272h1v1h-1zM452 273h1v1h-1zM459 273h2v1h-2zM452 274h1v1h-1zM457 274h2v1h-2zM451 275h1v1h-1zM455 275h2v1h-2zM451 276h1v1h-1zM453 276h2v1h-2zM450 277h3v1h-3zM450 278h2v1h-2zM452 279h2v1h-2zM454 280h2v1h-2z" fill="#ffff00" stroke="none"/>
<path d="M485 277h2v1h-2zM483 278h2v1h-2zM481 279h2v1h-2zM481 280h1v1h-1zM483 280h2v1h-2zM482 281h1v1h-1zM485 281h3v1h-3zM482 282h1v1h-1zM488 282h2v1h-2zM483 283h1v1h-1zM490 283h2v1h-2zM483 284h1v1h-1zM492 284h2v1h-2z" fill="#ffff00" stroke="none"/>
</g>
<g id="panel-lines">
<rect x="69" y="138" width="476" height="1" fill="#ff0000"/>
<rect x="69" y="235" width="476" height="1" fill="#ff0000"/>
<rect x="69" y="332" width="476" height="1" fill="#ff0000"/>
</g>
</g>
<g id="labels">
<text transform="translate(0,22.6) scale(1,1.111)" class="t" x="68.6 76.6 84.6 92.6 100.6 108.6 116.6 124.6 132.6 140.6 148.6 156.6 164.6 172.6 180.6 188.6 196.6 204.6 212.6 220.6 228.6 236.6 244.6 252.6 260.6 268.6 276.6 282.6 292.6 300.6 308.6 316.6 324.6 332.6 340.6 348.6 354.6 364.6 372.6 380.6 388.6 396.6 404.6 412.6 420.6 428.6 436.6" y="0" xml:space="preserve">  7351                   73.58S  166.62E   160M</text>
<text transform="translate(0,35.6) scale(1,1.111)" class="t" x="68.6 76.6 84.6 92.6 100.6 108.6 116.6 124.6 132.6 140.6 148.6 156.6 164.6 172.6 180.6 188.6 196.6 204.6 212.6 220.6 228.6 236.6 244.6 252.6 260.6 268.6 276.6 284.6 292.6 300.6 308.6 316.6 324.6 332.6 340.6 348.6 356.6 364.6 372.6 380.6 388.6 396.6 404.6 412.6 420.6" y="0 0 0 0 0 0 0 0 0 0 0 0 0 0 0 0 0 0 0 0 0 0 -0.9 0 0 0 0 0 0 0 0 0 0 0 0 0 0 0 0 0 0 0 0 0 0" xml:space="preserve">10 Mar 2015/120000UTC - 13 Mar 2015/000000UTC</text>
<text transform="translate(0,447.6) scale(1,1.111)" class="t" x="60.6 68.6" y="0" xml:space="preserve">06</text>
<text transform="translate(0,447.6) scale(1,1.111)" class="t" x="99.6 107.6" y="0" xml:space="preserve">12</text>
<text transform="translate(0,447.6) scale(1,1.111)" class="t" x="138.6 146.6" y="0" xml:space="preserve">18</text>
<text transform="translate(0,447.6) scale(1,1.111)" class="t" x="177.6 185.6" y="0" xml:space="preserve">00</text>
<text transform="translate(0,447.6) scale(1,1.111)" class="t" x="216.6 224.6" y="0" xml:space="preserve">06</text>
<text transform="translate(0,447.6) scale(1,1.111)" class="t" x="256.6 264.6" y="0" xml:space="preserve">12</text>
<text transform="translate(0,447.6) scale(1,1.111)" class="t" x="295.6 303.6" y="0" xml:space="preserve">18</text>
<text transform="translate(0,447.6) scale(1,1.111)" class="t" x="334.6 342.6" y="0" xml:space="preserve">00</text>
<text transform="translate(0,447.6) scale(1,1.111)" class="t" x="373.6 381.6" y="0" xml:space="preserve">06</text>
<text transform="translate(0,447.6) scale(1,1.111)" class="t" x="412.6 420.6" y="0" xml:space="preserve">12</text>
<text transform="translate(0,447.6) scale(1,1.111)" class="t" x="452.6 460.6" y="0" xml:space="preserve">18</text>
<text transform="translate(0,447.6) scale(1,1.111)" class="t" x="491.6 499.6" y="0" xml:space="preserve">00</text>
<text transform="translate(0,447.6) scale(1,1.111)" class="t" x="530.6 538.6" y="0" xml:space="preserve">06</text>
<text transform="translate(0,460.6) scale(1,1.111)" class="t" x="161.6 169.6 177.6 185.6 193.6 201.6" y="0" xml:space="preserve">11 Mar</text>
<text transform="translate(0,460.6) scale(1,1.111)" class="t" x="318.6 326.6 334.6 342.6 350.6 358.6" y="0" xml:space="preserve">12 Mar</text>
<text transform="translate(0,460.6) scale(1,1.111)" class="t" x="475.6 483.6 491.6 499.6 507.6 515.6" y="0" xml:space="preserve">13 Mar</text>
<text transform="translate(0,478.6) scale(1,1.111)" class="t" x="15.6" y="0" xml:space="preserve">2</text>
<text class="l" x="565.5 570 577.5" y="64.8" xml:space="preserve">0.0</text>
<text class="l" x="559.5 565.5 570 577.5" y="82.8 83.8 83.8 83.8" xml:space="preserve">-5.0</text>
<text class="l" x="553.5 559.5 565.5 570 577.5" y="102.8 103.8 103.8 103.8 103.8" xml:space="preserve">-10.0</text>
<text class="l" x="553.5 559.5 565.5 570 577.5" y="121.8 122.8 122.8 122.8 122.8" xml:space="preserve">-15.0</text>
<text class="l" x="553.5 559.5 565.5 570 577.5" y="140.8 141.8 141.8 141.8 141.8" xml:space="preserve">-20.0</text>
<text class="l" x="553.5 559.5 565.5 570 577.5" y="161.8" xml:space="preserve">980.0</text>
<text class="l" x="553.5 559.5 565.5 570 577.5" y="180.8" xml:space="preserve">975.0</text>
<text class="l" x="553.5 559.5 565.5 570 577.5" y="200.8" xml:space="preserve">970.0</text>
<text class="l" x="553.5 559.5 565.5 570 577.5" y="219.8" xml:space="preserve">965.0</text>
<text class="l" x="553.5 559.5 565.5 570 577.5" y="238.8" xml:space="preserve">960.0</text>
<text class="l" x="565.5 570 577.5" y="258.8" xml:space="preserve">4.0</text>
<text class="l" x="565.5 570 577.5" y="277.8" xml:space="preserve">3.0</text>
<text class="l" x="565.5 570 577.5" y="297.8" xml:space="preserve">2.0</text>
<text class="l" x="565.5 570 577.5" y="316.8" xml:space="preserve">1.0</text>
<text class="l" x="565.5 570 577.5" y="335.8" xml:space="preserve">0.0</text>
<text class="l" x="559.5 565.5 570 577.5" y="355.8" xml:space="preserve">90.0</text>
<text class="l" x="559.5 565.5 570 577.5" y="374.8" xml:space="preserve">85.0</text>
<text class="l" x="559.5 565.5 570 577.5" y="394.8" xml:space="preserve">80.0</text>
<text class="l" x="559.5 565.5 570 577.5" y="413.8" xml:space="preserve">75.0</text>
<text class="l" x="559.5 565.5 570 577.5" y="432.8" xml:space="preserve">70.0</text>
<text class="l" x="588.5 594.5 600.5 606.5" y="93" xml:space="preserve">T(C)</text>
<text class="l" x="588.5 594.5 600.5 606.5 612.5 618.5 624.5 630.5" y="190" xml:space="preserve">Pre (mb)</text>
<text class="l" x="588.5 594.5 600.5 606.5 612.5 618.5 624.5 630.5" y="287" xml:space="preserve">SPD(MPS)</text>
<text class="l" x="588.5 594.5 600.5 606.5 612.5" y="384" xml:space="preserve">RH(%)</text>
</g>
<g id="label-fix" shape-rendering="crispEdges">
<rect x="285" y="21" width="2" height="2" fill="#ffff00"/>
<rect x="357" y="21" width="2" height="2" fill="#ffff00"/>
<rect x="431" y="18" width="2" height="2" fill="#000"/>
<rect x="79" y="31" width="2" height="2" fill="#000"/>
<rect x="135" y="31" width="2" height="2" fill="#000"/>
<rect x="183" y="31" width="2" height="2" fill="#000"/>
<rect x="191" y="31" width="2" height="2" fill="#000"/>
<rect x="199" y="31" width="2" height="2" fill="#000"/>
<rect x="207" y="31" width="2" height="2" fill="#000"/>
<rect x="245" y="31" width="6" height="1" fill="#ffff00"/>
<rect x="327" y="31" width="2" height="2" fill="#000"/>
<rect x="359" y="31" width="2" height="2" fill="#000"/>
<rect x="367" y="31" width="2" height="2" fill="#000"/>
<rect x="375" y="31" width="2" height="2" fill="#000"/>
<rect x="383" y="31" width="2" height="2" fill="#000"/>
<rect x="391" y="31" width="2" height="2" fill="#000"/>
<rect x="399" y="31" width="2" height="2" fill="#000"/>
<rect x="63" y="443" width="2" height="2" fill="#000"/>
<rect x="180" y="443" width="2" height="2" fill="#000"/>
<rect x="188" y="443" width="2" height="2" fill="#000"/>
<rect x="219" y="443" width="2" height="2" fill="#000"/>
<rect x="337" y="443" width="2" height="2" fill="#000"/>
<rect x="345" y="443" width="2" height="2" fill="#000"/>
<rect x="376" y="443" width="2" height="2" fill="#000"/>
<rect x="494" y="443" width="2" height="2" fill="#000"/>
<rect x="502" y="443" width="2" height="2" fill="#000"/>
<rect x="533" y="443" width="2" height="2" fill="#000"/>
<rect x="568" y="60" width="1" height="3" fill="#000"/>
<rect x="572" y="63" width="2" height="2" fill="#ff0000"/>
<rect x="580" y="60" width="1" height="3" fill="#000"/>
<rect x="560" y="80" width="5" height="1" fill="#ff0000"/>
<rect x="572" y="82" width="2" height="2" fill="#ff0000"/>
<rect x="580" y="79" width="1" height="3" fill="#000"/>
<rect x="554" y="100" width="5" height="1" fill="#ff0000"/>
<rect x="568" y="99" width="1" height="3" fill="#000"/>
<rect x="572" y="102" width="2" height="2" fill="#ff0000"/>
<rect x="580" y="99" width="1" height="3" fill="#000"/>
<rect x="554" y="119" width="5" height="1" fill="#ff0000"/>
<rect x="572" y="121" width="2" height="2" fill="#ff0000"/>
<rect x="580" y="118" width="1" height="3" fill="#000"/>
<rect x="554" y="138" width="5" height="1" fill="#ff0000"/>
<rect x="568" y="137" width="1" height="3" fill="#000"/>
<rect x="572" y="140" width="2" height="2" fill="#ff0000"/>
<rect x="580" y="137" width="1" height="3" fill="#000"/>
<rect x="568" y="157" width="1" height="3" fill="#000"/>
<rect x="572" y="160" width="2" height="2" fill="#ff0000"/>
<rect x="580" y="157" width="1" height="3" fill="#000"/>
<rect x="572" y="179" width="2" height="2" fill="#ff0000"/>
<rect x="580" y="176" width="1" height="3" fill="#000"/>
<rect x="568" y="196" width="1" height="3" fill="#000"/>
<rect x="572" y="199" width="2" height="2" fill="#ff0000"/>
<rect x="580" y="196" width="1" height="3" fill="#000"/>
<rect x="572" y="218" width="2" height="2" fill="#ff0000"/>
<rect x="580" y="215" width="1" height="3" fill="#000"/>
<rect x="568" y="234" width="1" height="3" fill="#000"/>
<rect x="572" y="237" width="2" height="2" fill="#ff0000"/>
<rect x="580" y="234" width="1" height="3" fill="#000"/>
<rect x="572" y="257" width="2" height="2" fill="#ff0000"/>
<rect x="580" y="254" width="1" height="3" fill="#000"/>
<rect x="572" y="276" width="2" height="2" fill="#ff0000"/>
<rect x="580" y="273" width="1" height="3" fill="#000"/>
<rect x="572" y="296" width="2" height="2" fill="#ff0000"/>
<rect x="580" y="293" width="1" height="3" fill="#000"/>
<rect x="572" y="315" width="2" height="2" fill="#ff0000"/>
<rect x="580" y="312" width="1" height="3" fill="#000"/>
<rect x="568" y="331" width="1" height="3" fill="#000"/>
<rect x="572" y="334" width="2" height="2" fill="#ff0000"/>
<rect x="580" y="331" width="1" height="3" fill="#000"/>
<rect x="568" y="351" width="1" height="3" fill="#000"/>
<rect x="572" y="354" width="2" height="2" fill="#ff0000"/>
<rect x="580" y="351" width="1" height="3" fill="#000"/>
<rect x="572" y="373" width="2" height="2" fill="#ff0000"/>
<rect x="580" y="370" width="1" height="3" fill="#000"/>
<rect x="568" y="390" width="1" height="3" fill="#000"/>
<rect x="572" y="393" width="2" height="2" fill="#ff0000"/>
<rect x="580" y="390" width="1" height="3" fill="#000"/>
<rect x="572" y="412" width="2" height="2" fill="#ff0000"/>
<rect x="580" y="409" width="1" height="3" fill="#000"/>
<rect x="568" y="428" width="1" height="3" fill="#000"/>
<rect x="572" y="431" width="2" height="2" fill="#ff0000"/>
<rect x="580" y="428" width="1" height="3" fill="#000"/>
</g>
</svg>
</body></html>
